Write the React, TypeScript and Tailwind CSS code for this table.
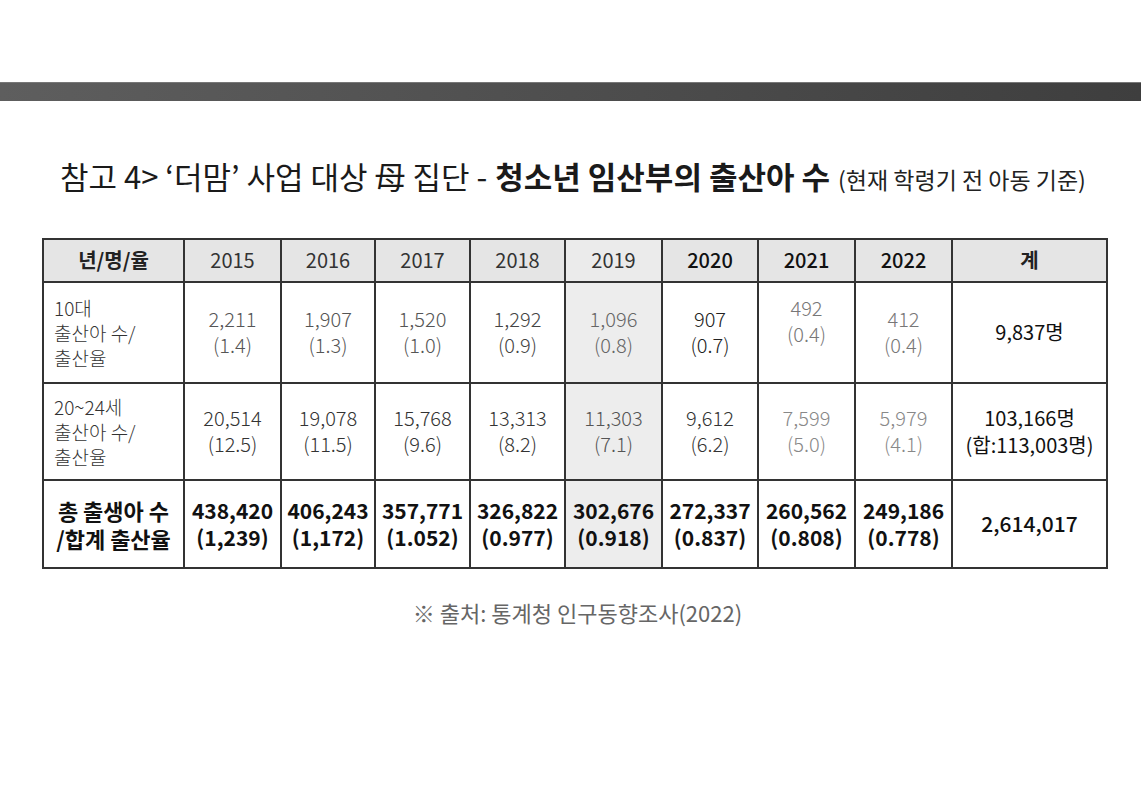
import React from "react";

type Cell = { a: string; b?: string; tone?: string; raise?: boolean };

const font = { fontFamily: '"Noto Sans CJK KR", "Noto Sans", sans-serif' };

const years = ["2015", "2016", "2017", "2018", "2019", "2020", "2021", "2022"];

const teen: Cell[] = [
  { a: "2,211", b: "(1.4)", tone: "text-[#555] font-light" },
  { a: "1,907", b: "(1.3)", tone: "text-[#555] font-light" },
  { a: "1,520", b: "(1.0)", tone: "text-[#555] font-light" },
  { a: "1,292", b: "(0.9)", tone: "text-[#444] font-light" },
  { a: "1,096", b: "(0.8)", tone: "text-[#666] font-light" },
  { a: "907", b: "(0.7)", tone: "text-[#222] font-light" },
  { a: "492", b: "(0.4)", tone: "text-[#777] font-light", raise: true },
  { a: "412", b: "(0.4)", tone: "text-[#777] font-light" },
];

const young: Cell[] = [
  { a: "20,514", b: "(12.5)", tone: "text-[#333] font-light" },
  { a: "19,078", b: "(11.5)", tone: "text-[#333] font-light" },
  { a: "15,768", b: "(9.6)", tone: "text-[#333] font-light" },
  { a: "13,313", b: "(8.2)", tone: "text-[#333] font-light" },
  { a: "11,303", b: "(7.1)", tone: "text-[#555] font-light" },
  { a: "9,612", b: "(6.2)", tone: "text-[#333] font-light" },
  { a: "7,599", b: "(5.0)", tone: "text-[#888] font-light" },
  { a: "5,979", b: "(4.1)", tone: "text-[#888] font-light" },
];

const total: Cell[] = [
  { a: "438,420", b: "(1,239)" },
  { a: "406,243", b: "(1,172)" },
  { a: "357,771", b: "(1.052)" },
  { a: "326,822", b: "(0.977)" },
  { a: "302,676", b: "(0.918)" },
  { a: "272,337", b: "(0.837)" },
  { a: "260,562", b: "(0.808)" },
  { a: "249,186", b: "(0.778)" },
];

const td = "border-2 border-[#333] text-center align-middle p-0";

function ValueRow({ cells, size, bold }: { cells: Cell[]; size: string; bold?: boolean }) {
  return (
    <>
      {cells.map((c, i) => (
        <td
          key={i}
          className={`${td} ${i === 4 ? "bg-[#ededed]" : "bg-white"} ${size} ${
            bold ? "font-bold text-[#111]" : c.tone ?? ""
          }`}
        >
          <div className={c.raise ? "-mt-[22px]" : ""}>
            <div>{c.a}</div>
            <div>{c.b}</div>
          </div>
        </td>
      ))}
    </>
  );
}

export default function App() {
  return (
    <div className="w-[1141px] h-[807px] bg-white overflow-hidden" style={font}>
      <div className="mt-[82px] h-[19px] bg-gradient-to-r from-[#5e5e5e] via-[#4e4e4e] to-[#3e3e3e] border-t border-[#777]" />

      <div className="mt-[55px] pl-[60px] flex items-baseline whitespace-nowrap text-[#1a1a1a]">
        <span className="text-[31px] leading-[40px]">참고 4&gt; ‘더맘’ 사업 대상 母 집단 - </span>
        <span className="text-[31px] leading-[40px] font-bold ml-[8px]">청소년 임산부의 출산아 수</span>
        <span className="text-[23px] ml-[8px] text-[#222]">(현재 학령기 전 아동 기준)</span>
      </div>

      <table className="ml-[42px] mt-[41px] border-collapse border-2 border-[#333] table-fixed w-[1064px]">
        <colgroup>
          <col className="w-[141px]" />
          <col className="w-[97px]" />
          <col className="w-[94px]" />
          <col className="w-[95px]" />
          <col className="w-[95px]" />
          <col className="w-[97px]" />
          <col className="w-[96px]" />
          <col className="w-[97px]" />
          <col className="w-[97px]" />
          <col className="w-[155px]" />
        </colgroup>
        <tbody>
          <tr className="h-[43px] bg-[#e5e5e5] text-[20px] leading-[26px]">
            <td className={`${td} font-bold text-[#222]`}>년/명/율</td>
            {years.map((y, i) => (
              <td
                key={y}
                className={`${td} ${i >= 5 ? "font-medium text-[#111]" : "text-[#333]"} ${
                  i === 4 ? "bg-[#ebebeb]" : ""
                }`}
              >
                {y}
              </td>
            ))}
            <td className={`${td} font-bold text-[#222]`}>계</td>
          </tr>

          <tr className="h-[101px]">
            <td className={`${td} text-left pl-[10px] text-[19px] leading-[25px] font-light text-[#333]`}>
              10대
              <br />
              출산아 수/
              <br />
              출산율
            </td>
            <ValueRow cells={teen} size="text-[20px] leading-[26px]" />
            <td className={`${td} text-[20px] text-[#111]`}>9,837명</td>
          </tr>

          <tr className="h-[97px]">
            <td className={`${td} text-left pl-[10px] text-[19px] leading-[25px] font-light text-[#333]`}>
              20~24세
              <br />
              출산아 수/
              <br />
              출산율
            </td>
            <ValueRow cells={young} size="text-[20px] leading-[26px]" />
            <td className={`${td} text-[20px] leading-[27px] text-[#111]`}>
              103,166명
              <br />
              (합:113,003명)
            </td>
          </tr>

          <tr className="h-[88px]">
            <td className={`${td} text-[22px] leading-[28px] font-bold text-[#111]`}>
              총 출생아 수
              <br />
              /합계 출산율
            </td>
            <ValueRow cells={total} size="text-[21px] leading-[27px]" bold />
            <td className={`${td} text-[21px] font-medium text-[#111]`}>2,614,017</td>
          </tr>
        </tbody>
      </table>

      <div className="mt-[28px] text-center text-[22px] leading-[30px] text-[#666] pl-[14px]">
        ※ 출처: 통계청 인구동향조사(2022)
      </div>
    </div>
  );
}
